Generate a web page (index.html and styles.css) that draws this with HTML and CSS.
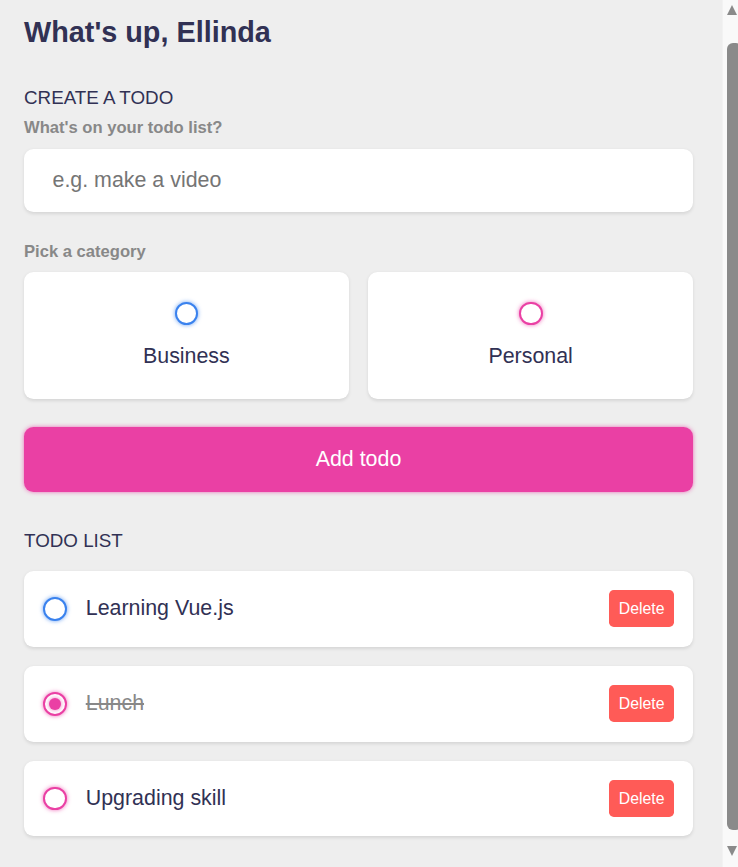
FILE: index.html
```html
<!DOCTYPE html>
<html lang="en">
<head>
<meta charset="utf-8">
<title>Todo</title>
<link rel="stylesheet" href="styles.css">
</head>
<body>
<main class="app">
  <section class="greeting">
    <h2 class="title">What's up, Ellinda</h2>
  </section>

  <section class="create-todo">
    <h3>CREATE A TODO</h3>
    <form class="create-form">
      <h4>What's on your todo list?</h4>
      <input type="text" class="todo-input" placeholder="e.g. make a video">
      <h4>Pick a category</h4>
      <div class="options">
        <label class="option">
          <span class="bubble business"></span>
          <div class="option-name">Business</div>
        </label>
        <label class="option">
          <span class="bubble personal"></span>
          <div class="option-name">Personal</div>
        </label>
      </div>
      <button type="button" class="add-btn">Add todo</button>
    </form>
  </section>

  <section class="todo-list">
    <h3 class="list-title">TODO LIST</h3>
    <div class="list">
      <div class="todo-item">
        <span class="bubble business"></span>
        <div class="todo-content">Learning Vue.js</div>
        <div class="actions"><button type="button" class="delete">Delete</button></div>
      </div>
      <div class="todo-item done">
        <span class="bubble personal checked"></span>
        <div class="todo-content">Lunch</div>
        <div class="actions"><button type="button" class="delete">Delete</button></div>
      </div>
      <div class="todo-item">
        <span class="bubble personal"></span>
        <div class="todo-content">Upgrading skill</div>
        <div class="actions"><button type="button" class="delete">Delete</button></div>
      </div>
    </div>
  </section>
</main>
<div class="fake-scrollbar" aria-hidden="true">
  <span class="sb-arrow sb-up"></span>
  <span class="sb-thumb"></span>
  <span class="sb-arrow sb-down"></span>
</div>
<script src="script.js"></script>
</body>
</html>
```

FILE: styles.css
```css
* {
  margin: 0;
  padding: 0;
  box-sizing: border-box;
}

html {
  background: #eeeeee;
}

body {
  margin: 0;
  background: #eeeeee;
  font-family: "Liberation Sans", Arial, sans-serif;
  color: #313154;
}

.app {
  padding: 46px 45px 38px 24px;
}

.greeting .title {
  font-size: 28.8px;
  font-weight: 700;
  color: #313154;
  line-height: normal;
}

.create-todo {
  margin-top: 37.5px;
}

h3 {
  font-size: 18.8px;
  font-weight: 400;
  color: #313154;
  margin-bottom: 9.8px;
  line-height: normal;
}

h4 {
  font-size: 16.6px;
  font-weight: 700;
  color: #888888;
  margin-bottom: 10.6px;
  line-height: normal;
}

.todo-input {
  display: block;
  width: 100%;
  font-family: "Liberation Sans", Arial, sans-serif;
  font-size: 21.4px;
  padding: 19px 28.5px;
  color: #313154;
  background: #ffffff;
  border: none;
  outline: none;
  border-radius: 9.5px;
  box-shadow: 0 1.2px 3.6px rgba(0, 0, 0, 0.1);
  margin-bottom: 29.7px;
}

.todo-input::placeholder {
  color: #757575;
}

.options {
  display: grid;
  grid-template-columns: 1fr 1fr;
  gap: 19.5px;
  margin-bottom: 27.7px;
}

.option {
  display: flex;
  flex-direction: column;
  align-items: center;
  justify-content: center;
  background: #ffffff;
  padding: 29.5px;
  border-radius: 9.5px;
  box-shadow: 0 1.2px 3.6px rgba(0, 0, 0, 0.1);
}

.option-name {
  color: #313154;
  font-size: 21.4px;
  margin-top: 19px;
}

.bubble {
  display: flex;
  align-items: center;
  justify-content: center;
  flex: none;
  width: 23.75px;
  height: 23.75px;
  border-radius: 999px;
  border: 2.4px solid #3a82ee;
  box-shadow: 0 0 4.75px rgba(58, 130, 238, 0.75);
  background: #ffffff;
}

.bubble.personal {
  border-color: #ea40a4;
  box-shadow: 0 0 4.75px rgba(234, 64, 164, 0.75);
}

.bubble.checked::after {
  content: "";
  display: block;
  width: 11.9px;
  height: 11.9px;
  border-radius: 999px;
  background: #ea40a4;
  box-shadow: 0 0 4.75px rgba(234, 64, 164, 0.75);
}

.add-btn {
  display: block;
  width: 100%;
  font-family: "Liberation Sans", Arial, sans-serif;
  font-size: 21.4px;
  font-weight: 400;
  padding: 20px 28.5px;
  line-height: normal;
  color: #ffffff;
  background: #ea40a4;
  border: none;
  border-radius: 9.5px;
  box-shadow: 0 0 4.75px rgba(234, 64, 164, 0.75);
}

.todo-list {
  margin-top: 38.7px;
}

.todo-list .list-title {
  margin-bottom: 18.8px;
}

.todo-item {
  display: flex;
  align-items: center;
  background: #ffffff;
  padding: 19.4px 19px;
  border-radius: 9.5px;
  box-shadow: 0 1.2px 3.6px rgba(0, 0, 0, 0.1);
  margin-bottom: 19px;
}

.todo-item .bubble {
  margin-right: 19px;
}

.todo-content {
  flex: 1 1 0%;
  font-size: 21.4px;
  color: #313154;
}

.todo-item.done .todo-content {
  color: #888888;
  text-decoration: line-through;
}

.actions {
  display: flex;
  align-items: center;
}

.delete {
  display: block;
  font-family: "Liberation Sans", Arial, sans-serif;
  font-size: 15.8px;
  line-height: normal;
  padding: 9.5px;
  border: none;
  border-radius: 4.75px;
  color: #ffffff;
  background: #ff5b57;
}

/* drawn browser scrollbar, as seen in the reference */
.fake-scrollbar {
  position: fixed;
  top: 0;
  right: 0;
  bottom: 0;
  width: 16px;
  background: #f9f9f9;
  border-left: 1px solid #f2f2f2;
}

.sb-thumb {
  position: absolute;
  top: 43px;
  bottom: 37px;
  left: 4px;
  right: -4px;
  background: #8a8a8a;
  border-radius: 6px;
}

.sb-arrow {
  position: absolute;
  left: 4px;
  width: 0;
  height: 0;
  border-left: 5px solid transparent;
  border-right: 5px solid transparent;
}

.sb-up {
  top: 5px;
  border-bottom: 10px solid #8a8a8a;
}

.sb-down {
  bottom: 11px;
  border-top: 10px solid #8a8a8a;
}
```

FILE: script.js
```js
window.scrollTo(0, 30);
window.addEventListener('load', function () {
  window.scrollTo(0, 30);
});
```
